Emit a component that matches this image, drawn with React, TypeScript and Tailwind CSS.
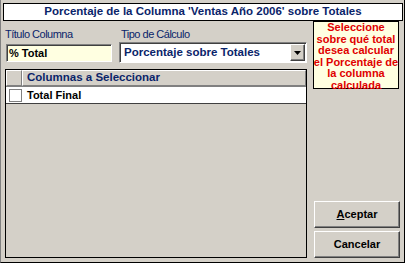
import React from "react";

const raised =
  "border-t border-l border-t-white border-l-white border-b border-r border-b-[#404040] border-r-[#404040] shadow-[inset_-1px_-1px_0_#808080]";
const sunken =
  "border-t border-l border-t-[#808080] border-l-[#808080] border-b border-r border-b-white border-r-white shadow-[inset_1px_1px_0_#404040]";

export default function App() {
  return (
    <div className="w-[405px] h-[263px] bg-[#d4d0c8] border-l border-l-[#808080] border-r border-r-black border-b border-b-black flex flex-col font-['Liberation_Sans',Arial,sans-serif] overflow-hidden">
      <div className="ml-[2px] mr-[1px] mt-[3px] h-[18px] shrink-0 border border-black bg-white flex items-center justify-center text-[11.5px] font-bold text-[#0a246a] leading-none">
        Porcentaje de la Columna 'Ventas Año 2006' sobre Totales
      </div>
      <div className="flex flex-1 min-h-0">
        <div className="ml-[4px] w-[302px] flex flex-col mb-[4px]">
          <div className="flex mt-[7px]">
            <div className="w-[107px] flex flex-col">
              <div className="h-[13px] text-[11px] leading-[13px] tracking-[-0.5px] text-[#0a246a]">Título Columna</div>
              <div className={`ml-[1px] mt-[3px] w-[106px] h-[18px] bg-[#ffffe1] ${sunken} flex items-center pl-[2px] text-[11px] font-bold text-black`}>
                % Total
              </div>
            </div>
            <div className="ml-[7px] w-[188px] flex flex-col">
              <div className="h-[13px] text-[11px] leading-[13px] tracking-[-0.5px] text-[#0a246a] ml-[2px]">Tipo de Cálculo</div>
              <div className={`mt-[1px] w-[188px] h-[21px] bg-white ${sunken} flex items-stretch p-[1px]`}>
                <div className="flex-1 flex items-center pl-[3px] text-[11.5px] font-bold text-[#0a246a]">Porcentaje sobre Totales</div>
                <div className={`w-[15px] bg-[#d4d0c8] ${raised} flex items-center justify-center`}>
                  <svg width="7" height="4" viewBox="0 0 7 4"><path d="M0 0h7L3.5 4z" fill="black" /></svg>
                </div>
              </div>
            </div>
          </div>
          <div className="mt-[6px] flex-1 border border-black bg-[#d4d0c8] flex flex-col">
            <div className="h-[17px] flex border-b border-b-[#808080]">
              <div className={`w-[16px] ${raised} shadow-none border-b-[#808080] border-r-[#808080]`}></div>
              <div className={`flex-1 ${raised} shadow-none border-b-[#808080] border-r-[#808080] flex items-center pl-[4px] text-[11.5px] font-bold text-[#0a246a]`}>
                Columnas a Seleccionar
              </div>
            </div>
            <div className="h-[17px] flex bg-white border-b border-b-[#404040]">
              <div className="w-[16px] flex items-center justify-center">
                <div className="w-[13px] h-[13px] border border-[#808080] bg-white ml-[2px]"></div>
              </div>
              <div className="flex-1 flex items-center pl-[5px] text-[11px] font-bold text-black">Total Final</div>
            </div>
          </div>
        </div>
        <div className="ml-[6px] w-[87px] flex flex-col mb-[4px]">
          <div className="w-[86px] h-[68px] border border-black bg-[#ffffe1] flex flex-col items-center text-[11px] font-bold text-[#e00000] leading-[11.6px] text-center">
            <span>Seleccione</span>
            <span>sobre qué total</span>
            <span>desea calcular</span>
            <span className="whitespace-nowrap">el Porcentaje de</span>
            <span>la columna</span>
            <span>calculada</span>
          </div>
          <div className="flex-1"></div>
          <button className={`h-[27px] w-[86px] ml-[1px] bg-[#d4d0c8] ${raised} text-[11px] font-bold text-black flex items-center justify-center`}>
            <span><span className="underline">A</span>ceptar</span>
          </button>
          <button className={`mt-[3px] h-[27px] w-[86px] ml-[1px] bg-[#d4d0c8] ${raised} text-[11px] font-bold text-black flex items-center justify-center`}>
            Cancelar
          </button>
        </div>
      </div>
    </div>
  );
}
